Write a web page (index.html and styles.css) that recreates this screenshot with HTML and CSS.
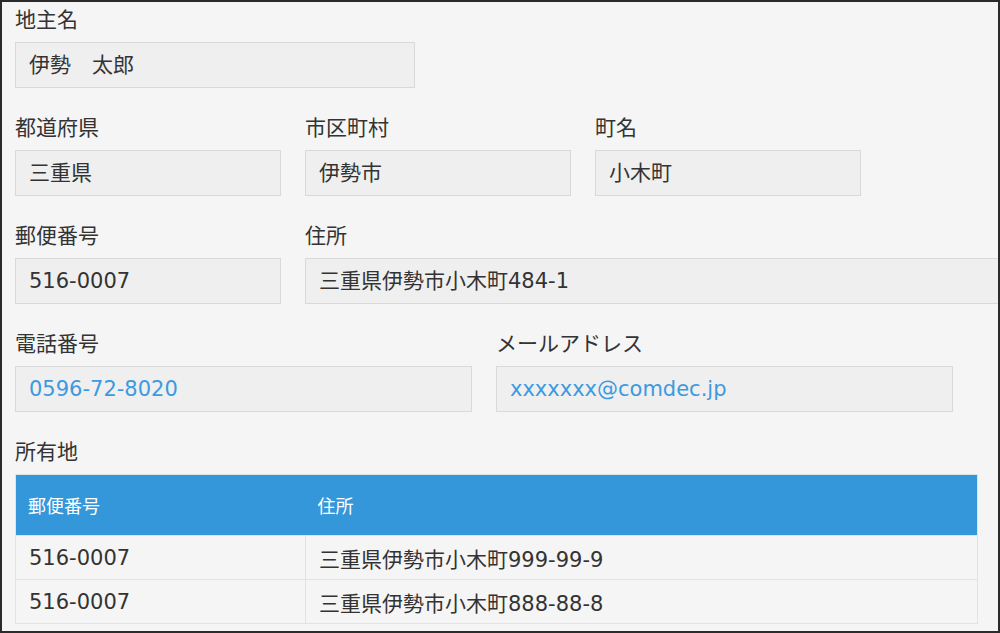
FILE: index.html
```html
<!DOCTYPE html>
<html lang="ja">
<head>
  <meta charset="UTF-8" />
  <title>地主情報</title>
  <link rel="stylesheet" href="styles.css">
</head>
<body>

<main class="ficha">
  <div class="campo">
    <div class="etiqueta">地主名</div>
    <div class="valor ancho-nombre">伊勢　太郎</div>
  </div>

  <div class="fila">
    <div class="campo">
      <div class="etiqueta">都道府県</div>
      <div class="valor ancho-corto">三重県</div>
    </div>
    <div class="campo">
      <div class="etiqueta">市区町村</div>
      <div class="valor ancho-corto">伊勢市</div>
    </div>
    <div class="campo">
      <div class="etiqueta">町名</div>
      <div class="valor ancho-corto">小木町</div>
    </div>
  </div>

  <div class="fila">
    <div class="campo">
      <div class="etiqueta">郵便番号</div>
      <div class="valor ancho-corto">516-0007</div>
    </div>
    <div class="campo">
      <div class="etiqueta">住所</div>
      <div class="valor ancho-largo">三重県伊勢市小木町484-1</div>
    </div>
  </div>

  <div class="fila">
    <div class="campo">
      <div class="etiqueta">電話番号</div>
      <div class="valor ancho-medio enlace">0596-72-8020</div>
    </div>
    <div class="campo">
      <div class="etiqueta">メールアドレス</div>
      <div class="valor ancho-medio enlace">xxxxxxx@comdec.jp</div>
    </div>
  </div>

  <div class="campo">
    <div class="etiqueta">所有地</div>
    <table class="tabla-terrenos">
      <thead>
        <tr>
          <th class="col-cp">郵便番号</th>
          <th>住所</th>
        </tr>
      </thead>
      <tbody>
        <tr>
          <td>516-0007</td>
          <td>三重県伊勢市小木町999-99-9</td>
        </tr>
        <tr>
          <td>516-0007</td>
          <td>三重県伊勢市小木町888-88-8</td>
        </tr>
      </tbody>
    </table>
  </div>
</main>

</body>
</html>
```

FILE: styles.css
```css
html, body {
  margin: 0;
  height: 100%;
}

body {
  font-family: "DejaVu Sans", "Noto Sans CJK JP", sans-serif;
  background-color: #f5f5f5;
  color: #333;
  overflow: hidden;
}

.ficha {
  box-sizing: border-box;
  width: 1000px;
  height: 633px;
  border: 2px solid #2b2b2b;
  padding: 4px 0 0 13px;
  overflow: hidden;
}

.fila {
  display: flex;
  gap: 24px;
}

.campo {
  margin-bottom: 26px;
}

.etiqueta {
  font-size: 21px;
  line-height: 28px;
  margin-bottom: 8px;
  white-space: nowrap;
}

.valor {
  box-sizing: border-box;
  height: 46px;
  padding: 0 13px;
  background-color: #efefef;
  border: 1px solid #d9d9d9;
  font-size: 21px;
  line-height: 44px;
  white-space: nowrap;
}

.ancho-nombre {
  width: 400px;
}

.ancho-corto {
  width: 266px;
}

.ancho-medio {
  width: 457px;
}

.ancho-largo {
  width: 720px;
}

.enlace {
  color: #3d9ae0;
}

.tabla-terrenos {
  width: 963px;
  border-collapse: collapse;
  border: 1px solid #e2e2e2;
  font-size: 21px;
}

.tabla-terrenos th {
  height: 60px;
  padding: 0 12px;
  background-color: #3497da;
  color: white;
  font-size: 18px;
  font-weight: normal;
  text-align: left;
}

.tabla-terrenos .col-cp {
  width: 290px;
  box-sizing: border-box;
}

.tabla-terrenos td {
  height: 43px;
  padding: 0 13px;
  border: 1px solid #e2e2e2;
  background-color: #f5f5f5;
}
```
